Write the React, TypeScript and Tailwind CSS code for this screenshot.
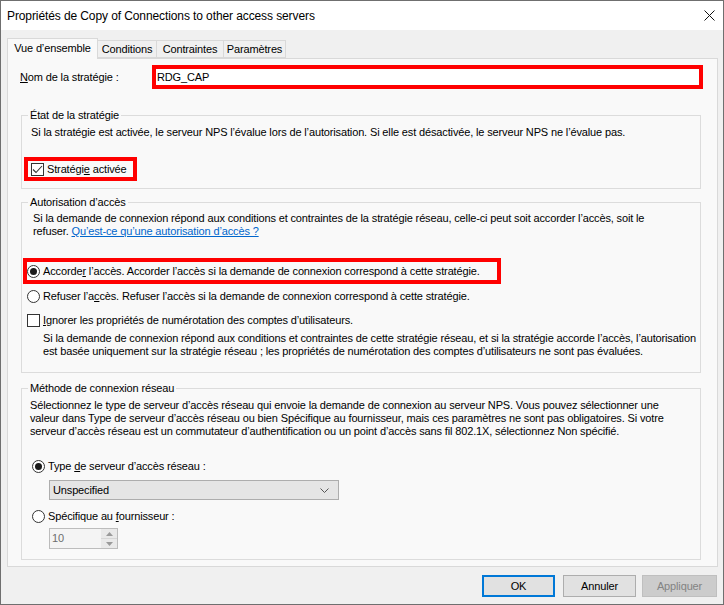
import React from "react";

const Radio = ({ checked }: { checked?: boolean }) => (
  <span className="flex h-[13px] w-[13px] shrink-0 items-center justify-center rounded-full border border-[#333333] bg-white">
    {checked && <span className="h-[7px] w-[7px] rounded-full bg-[#1a1a1a]" />}
  </span>
);

const Check = ({ checked }: { checked?: boolean }) => (
  <span className="flex h-[13px] w-[13px] shrink-0 items-center justify-center border border-[#333333] bg-white">
    {checked && (
      <svg width="11" height="11" viewBox="0 0 11 11">
        <path d="M1 5.5 L4 8.5 L10 2" fill="none" stroke="#333333" strokeWidth="1.1" />
      </svg>
    )}
  </span>
);

const Group = ({ title, children, className }: { title: string; children: React.ReactNode; className?: string }) => (
  <fieldset className={"ml-[13px] w-[680px] border border-[#dcdcdc] " + (className ?? "")}>
    <legend className="ml-[6px] px-[2px] leading-[13px]">{title}</legend>
    {children}
  </fieldset>
);

export default function App() {
  return (
    <div className="flex h-[605px] w-[724px] flex-col border border-[#6f6f6f] bg-[#f0f0f0] font-['Liberation_Sans',Arial,sans-serif] text-[11px] tracking-[-0.14px] text-black">
      {/* title bar */}
      <div className="flex h-[29px] shrink-0 items-center justify-between bg-white pl-[6px] pr-[8px] text-[12px] tracking-[-0.1px]">
        <span>Propriétés de Copy of Connections to other access servers</span>
        <svg width="11" height="11" viewBox="0 0 11 11">
          <path d="M0.5 0.5 L10.5 10.5 M10.5 0.5 L0.5 10.5" stroke="#111" strokeWidth="1" />
        </svg>
      </div>

      {/* tabs */}
      <div className="flex h-[28px] items-end px-[6px] pt-[8px]">
        <div className="relative z-10 -mb-px flex h-[21px] w-[91px] items-center justify-center border border-b-0 border-[#d9d9d9] bg-[#f9f9f9] pb-[2px]">
          Vue d’ensemble
        </div>
        <div className="flex h-[18px] w-[59px] items-center justify-center border border-l-0 border-[#d9d9d9] bg-[#f0f0f0]">
          Conditions
        </div>
        <div className="flex h-[18px] w-[67px] items-center justify-center border border-l-0 border-[#d9d9d9] bg-[#f0f0f0]">
          Contraintes
        </div>
        <div className="flex h-[18px] w-[62px] items-center justify-center border border-l-0 border-[#d9d9d9] bg-[#f0f0f0]">
          Paramètres
        </div>
      </div>

      {/* panel */}
      <div className="ml-[6px] h-[509px] w-[711px] border border-[#d9d9d9] bg-[#f9f9f9]">
        <div className="mt-[6px] flex h-[24px] items-center pl-[12px]">
          <span className="w-[132px] pt-[1px]">
            <span className="underline">N</span>om de la stratégie :
          </span>
          <div className="flex h-[24px] w-[551px] items-center border-4 border-[#ff0000] bg-white pl-[1px]">RDG_CAP</div>
        </div>

        <Group title="État de la stratégie" className="mt-[20px] pb-[7px]">
          <div className="mt-[4px] whitespace-nowrap pl-[9px] leading-[13px]">
            Si la stratégie est activée, le serveur NPS l’évalue lors de l’autorisation. Si elle est désactivée, le serveur NPS ne l’évalue pas.
          </div>
          <div className="ml-[2px] mt-[18px] flex h-[24px] w-[113px] items-center gap-[3px] border-4 border-[#ff0000] pl-[3px]">
            <Check checked />
            <span>
              Stratégi<span className="underline">e</span> activée
            </span>
          </div>
        </Group>

        <Group title="Autorisation d’accès" className="mt-[7px] pb-[14px]">
          <div className="mt-[3px] whitespace-nowrap pl-[11px] leading-[13px]">
            Si la demande de connexion répond aux conditions et contraintes de la stratégie réseau, celle-ci peut soit accorder l’accès, soit le
            <br />
            refuser. <span className="text-[#0066cc] underline">Qu’est-ce qu’une autorisation d’accès ?</span>
          </div>
          <div className="ml-[1px] mt-[20px] flex h-[26px] w-[478px] items-center gap-[3px] border-4 border-[#ff0000] whitespace-nowrap">
            <Radio checked />
            <span>
              Accorde<span className="underline">r</span> l’accès. Accorder l’accès si la demande de connexion correspond à cette stratégie.
            </span>
          </div>
          <div className="ml-[5px] mt-[4px] flex h-[16px] items-center gap-[3px] whitespace-nowrap">
            <Radio />
            <span>
              Refuser l’a<span className="underline">c</span>cès. Refuser l’accès si la demande de connexion correspond à cette stratégie.
            </span>
          </div>
          <div className="ml-[5px] mt-[8px] flex h-[16px] items-center gap-[3px] whitespace-nowrap">
            <Check />
            <span>
              <span className="underline">I</span>gnorer les propriétés de numérotation des comptes d’utilisateurs.
            </span>
          </div>
          <div className="mt-[4px] whitespace-nowrap pl-[21px] leading-[13px]">
            Si la demande de connexion répond aux conditions et contraintes de cette stratégie réseau, et si la stratégie accorde l’accès, l’autorisation
            <br />
            est basée uniquement sur la stratégie réseau ; les propriétés de numérotation des comptes d’utilisateurs ne sont pas évaluées.
          </div>
        </Group>

        <Group title="Méthode de connexion réseau" className="mt-[9px] pb-[10px]">
          <div className="mt-[4px] whitespace-nowrap pl-[8px] leading-[13px]">
            Sélectionnez le type de serveur d’accès réseau qui envoie la demande de connexion au serveur NPS. Vous pouvez sélectionner une
            <br />
            valeur dans Type de serveur d’accès réseau ou bien Spécifique au fournisseur, mais ces paramètres ne sont pas obligatoires. Si votre
            <br />
            serveur d’accès réseau est un commutateur d’authentification ou un point d’accès sans fil 802.1X, sélectionnez Non spécifié.
          </div>
          <div className="ml-[10px] mt-[20px] flex h-[16px] items-center gap-[3px] whitespace-nowrap">
            <Radio checked />
            <span>
              Type <span className="underline">d</span>e serveur d’accès réseau :
            </span>
          </div>
          <div className="ml-[27px] mt-[6px] flex h-[20px] w-[290px] items-center justify-between border border-[#adadad] bg-[#e5e5e5] pl-[3px] pr-[9px]">
            <span>Unspecified</span>
            <svg width="9" height="5" viewBox="0 0 9 5">
              <path d="M0.5 0.5 L4.5 4.5 L8.5 0.5" fill="none" stroke="#555" strokeWidth="1" />
            </svg>
          </div>
          <div className="ml-[10px] mt-[8px] flex h-[16px] items-center gap-[3px] whitespace-nowrap">
            <Radio />
            <span>
              Spécifique au <span className="underline">f</span>ournisseur :
            </span>
          </div>
          <div className="ml-[27px] mt-[4px] flex h-[21px] w-[69px] items-stretch border border-[#bcbcbc] bg-[#f4f4f4]">
            <span className="flex flex-1 items-center pl-[2px] text-[#6d6d6d]">10</span>
            <div className="flex w-[16px] flex-col">
              <div className="flex flex-1 items-center justify-center border-b border-[#d6d6d6] bg-[#e9e9e9]">
                <svg width="7" height="4" viewBox="0 0 7 4">
                  <path d="M0 4 L3.5 0 L7 4 Z" fill="#9a9a9a" />
                </svg>
              </div>
              <div className="flex flex-1 items-center justify-center bg-[#e9e9e9]">
                <svg width="7" height="4" viewBox="0 0 7 4">
                  <path d="M0 0 L3.5 4 L7 0 Z" fill="#9a9a9a" />
                </svg>
              </div>
            </div>
          </div>
        </Group>
      </div>

      {/* buttons */}
      <div className="mt-[8px] flex justify-end pr-[6px]">
        <button className="flex h-[22px] w-[73px] items-center justify-center border-2 border-[#0078d7] bg-[#e1e1e1]">OK</button>
        <button className="ml-[8px] flex h-[22px] w-[73px] items-center justify-center border border-[#adadad] bg-[#e1e1e1]">Annuler</button>
        <button className="ml-[6px] flex h-[22px] w-[75px] items-center justify-center border border-[#bfbfbf] bg-[#cccccc] text-[#838383]">
          Appliquer
        </button>
      </div>
    </div>
  );
}
